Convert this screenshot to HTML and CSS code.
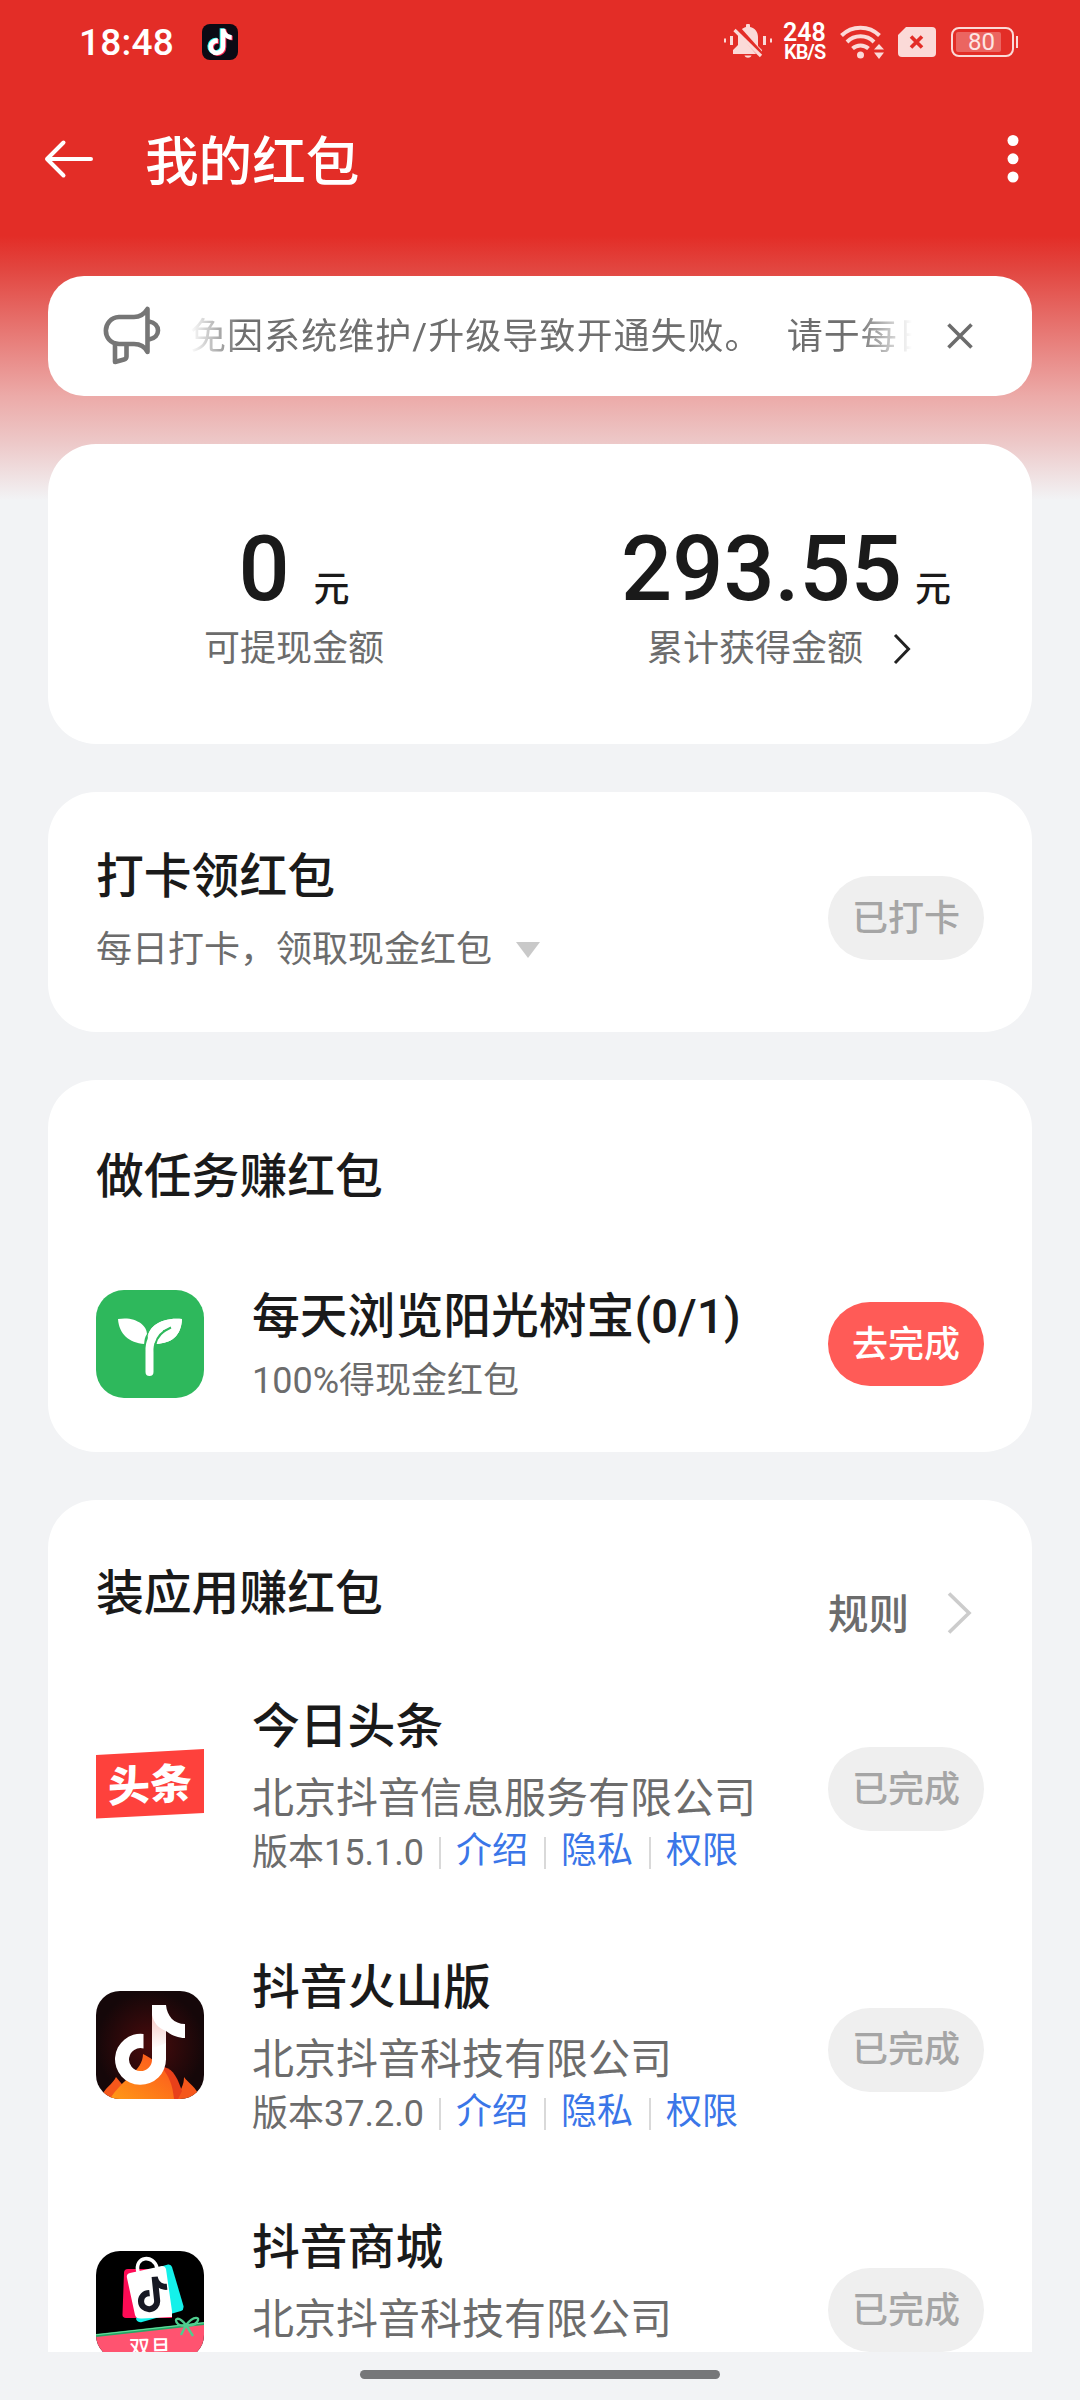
FILE: index.html
```html
<!DOCTYPE html>
<html lang="zh-CN">
<head>
<meta charset="utf-8">
<title>我的红包</title>
<link rel="stylesheet" href="styles.css">
</head>
<body>
<svg class="defs" width="0" height="0">
  <symbol id="note" viewBox="0 0 108 108"><path d="M56 14H70C71 25 78 33 89 33V47C82 47 75 44 70 40V68A25.5 25.5 0 1 1 47.5 43V57.5A11.5 11.5 0 1 0 56 68Z"/></symbol>
</svg>
<div class="screen">
  <div class="status">
    <span class="time">18:48</span>
    <svg class="app-badge" width="36" height="36" viewBox="0 0 36 36">
      <rect width="36" height="36" rx="8" fill="#0b0a14"/>
      <use href="#note" x="-1" y="-.5" width="36" height="36" fill="#25f4ee"/>
      <use href="#note" x="1" y=".7" width="36" height="36" fill="#fe2c55"/>
      <use href="#note" x="0" y="0" width="36" height="36" fill="#fff"/>
    </svg>
    <div class="indicators">
      <svg width="48" height="36" viewBox="0 0 48 36" fill="#fbdad8">
        <path d="M0 14.500h2v4H0zM6 12h3v9H6zM39 12h3v9h-3zM46 14.500h2v4h-2z"/>
        <path d="M9 30v-4l5-5v-9C15 7 18 4 22 3V1.500a2 2 0 0 1 4 0V3c5 1 8 5 8 10v9l4 4v4z"/>
        <path d="M20.500 31.500h7c-1 3-6 3-7 0z"/>
        <path d="M12.500 3.500 38 32" stroke="#e32d27" stroke-width="6"/>
        <path d="M10.500 6 37 32" stroke="#fbdad8" stroke-width="3.200"/>
      </svg>
      <div class="speed"><b>248</b><b class="unit">KB/S</b></div>
      <svg class="wifi" width="45" height="36" viewBox="0 0 45 36">
        <g fill="none" stroke="#fbdad8" stroke-width="4">
          <path d="M1.500 11.500a27 27 0 0 1 38 0"/><path d="M7 18a19 19 0 0 1 27 0"/><path d="M12.500 24.500a12 12 0 0 1 16 0"/>
        </g>
        <circle cx="20.500" cy="31" r="3.500" fill="#fbdad8"/>
        <path d="M34 25.500 39 20l5 5.500zM34 28.500h10L39 35z" fill="#fbdad8"/>
      </svg>
      <svg class="sim" width="38" height="30" viewBox="0 0 38 30">
        <path d="M8 0h26a4 4 0 0 1 4 4v22a4 4 0 0 1-4 4H4a4 4 0 0 1-4-4V8z" fill="#fbdad8"/>
        <path d="m13 9.500 11 11m0-11-11 11" stroke="#e32d27" stroke-width="3.600"/>
      </svg>
      <div class="battery"><span>80</span></div>
    </div>
  </div>

  <header class="bar">
    <svg width="50" height="40" viewBox="0 0 50 40" fill="none" stroke="#fff" stroke-width="4" stroke-linecap="round" stroke-linejoin="round"><path d="M47 20H3M19.500 3.500 3 20l16.500 16.500"/></svg>
    <h1>我的红包</h1>
    <svg class="more" width="12" height="50" viewBox="0 0 12 50" fill="#fff"><circle cx="6" cy="6.500" r="5.500"/><circle cx="6" cy="24.800" r="5.500"/><circle cx="6" cy="43" r="5.500"/></svg>
  </header>

  <main>
    <section class="notice">
      <svg width="60" height="60" viewBox="0 0 60 60" fill="none" stroke="#767676" stroke-width="4.600" stroke-linejoin="round">
        <path d="M17 11H32C38 11 43 7 45.500 3V46C43 41 38 38 32 38H17C-1 37 0 12 17 11Z"/>
        <path d="M47 15.500c12 2 12 16 0 18M13 39v17l9-2.500c2-.6 2.500-1.500 2.500-3V39"/>
      </svg>
      <div class="ticker">免因系统维护/升级导致开通失败。<span>请于每日</span></div>
      <svg width="26" height="26" viewBox="0 0 26 26" stroke="#6c6c6c" stroke-width="3.600"><path d="m1.500 1.500 23 23m0-23-23 23"/></svg>
    </section>

    <section class="card balance">
      <div class="col">
        <div class="amount"><b>0</b><span>元</span></div>
        <div class="label">可提现金额</div>
      </div>
      <div class="col total">
        <div class="amount"><b>293.55</b><span>元</span></div>
        <div class="label">累计获得金额<svg width="18" height="32" viewBox="0 0 18 32" fill="none" stroke="#222" stroke-width="3"><path d="m2 2 13.500 14L2 30"/></svg></div>
      </div>
    </section>

    <section class="card checkin">
      <div>
        <h2>打卡领红包</h2>
        <p class="sub">每日打卡，领取现金红包<svg width="26" height="18" viewBox="0 0 26 18"><path d="M1 1h24L13 17z" fill="#c9c9c9"/></svg></p>
      </div>
      <button class="pill">已打卡</button>
    </section>

    <section class="card tasks">
      <h2>做任务赚红包</h2>
      <div class="task">
        <svg class="icon" width="108" height="108" viewBox="0 0 108 108">
          <rect width="108" height="108" rx="28" fill="#2eb85c"/>
          <path d="M22 29C39 26 51 35 51 44C49 47 48 50 48.500 54C33 53 23 44 22 29Z" fill="#fff"/>
          <path d="M86 29C85 46 76 53 60 54C61 48 67 43 75 38C66 40 56 44 51 53C50 37 65 27 86 29Z" fill="#fff"/>
          <path d="M68 40.500C58 45 53 51 53.500 62V82" fill="none" stroke="#2eb85c" stroke-width="12"/>
          <path d="M64 43C56 47 53 52 53.500 62V82" fill="none" stroke="#fff" stroke-width="8" stroke-linecap="round"/>
          <path d="M86 29C85 46 76 53 60 54C61 48 67 43 74 38C66 40 57 44 52 51C50 37 65 27 86 29Z" fill="#fff"/>
          <path d="M75 37.500C67 41 61 46 59.500 54" fill="none" stroke="#2eb85c" stroke-width="2"/>
        </svg>
        <div class="info"><h3>每天浏览阳光树宝(0/1)</h3><p class="sub">100%得现金红包</p></div>
        <button class="pill go">去完成</button>
      </div>
    </section>

    <section class="card apps">
      <div class="head">
        <h2>装应用赚红包</h2>
        <a class="rules"><span>规则</span><svg width="26" height="42" viewBox="0 0 26 42" fill="none" stroke="#ccc" stroke-width="3.600"><path d="m2 1.500 20 19.500L2 40.500"/></svg></a>
      </div>

      <article class="app">
        <svg class="icon" width="108" height="108" viewBox="0 0 108 108">
          <path d="M0 25 108 19V83L0 88.500Z" fill="#fe413c"/>
          <text class="toutiao" x="12" y="70" transform="matrix(1 -.055 0 1 0 3)">头条</text>
        </svg>
        <div class="info">
          <h3>今日头条</h3>
          <p class="company">北京抖音信息服务有限公司</p>
          <p class="meta"><span>版本15.1.0</span><i></i><a>介绍</a><i></i><a>隐私</a><i></i><a>权限</a></p>
        </div>
        <button class="pill">已完成</button>
      </article>

      <article class="app">
        <svg class="icon" width="108" height="108" viewBox="0 0 108 108">
          <defs>
            <radialGradient id="ember"><stop offset="0" stop-color="#4a0b0c"/><stop offset="1" stop-color="#150709"/></radialGradient>
            <linearGradient id="flame" x1="0" y1="1" x2="1" y2="0"><stop offset="0" stop-color="#ff9a16"/><stop offset="1" stop-color="#fc4f1e"/></linearGradient>
            <linearGradient id="fold" x1="0" y1="0" x2="0" y2="1"><stop offset="0" stop-color="#f6c9c4"/><stop offset="1" stop-color="#fff"/></linearGradient>
            <clipPath id="tile"><rect width="108" height="108" rx="24"/></clipPath>
          </defs>
          <g clip-path="url(#tile)">
            <rect width="108" height="108" fill="url(#ember)"/>
            <path d="M4 108C8 97 17 93 20 86L30 98V108Z" fill="#f5571b"/>
            <path d="M80 108C85 98 88 94 88 86C92 92 101 96 104 108Z" fill="#f5571b"/>
            <path d="M68 76C78 78 82 89 86 100L82 108H60Z" fill="#e8401a"/>
            <path d="M14 108C26 88 47 80 47 63C60 70 76 80 78 108Z" fill="url(#flame)"/>
            <use href="#note" width="108" height="108" fill="#fff"/>
            <path d="M56 24C58 32 62 37 70 40V52L56 58Z" fill="url(#fold)"/>
          </g>
        </svg>
        <div class="info">
          <h3>抖音火山版</h3>
          <p class="company">北京抖音科技有限公司</p>
          <p class="meta"><span>版本37.2.0</span><i></i><a>介绍</a><i></i><a>隐私</a><i></i><a>权限</a></p>
        </div>
        <button class="pill">已完成</button>
      </article>

      <article class="app">
        <svg class="icon" width="108" height="108" viewBox="0 0 108 108">
          <g clip-path="url(#tile)">
            <rect width="108" height="108" fill="#000"/>
            <path d="M32 18H72Q75 18 75 22L76 67H30Q26 67 26.500 63L28 22Q28 18 32 18Z" fill="#fe0b55"/>
            <path d="M60 17 72 13.500Q75 13 76 16L87.500 55Q88 59 85 60L46 71Q42 72 40 68Z" fill="#14f1ea"/>
            <path d="M34 22 66 15Q69 15 70 18L76 60V66L46 67.500Q40 68 39 64L31 27Q30 23 34 22Z" fill="#fff"/>
            <path d="M42 21C38 5 58 3 61 17" fill="none" stroke="#fff" stroke-width="3.600"/>
            <use href="#note" x="33" y="20" width="47" height="47" fill="#161823" transform="rotate(-6 56 43)"/>
            <path d="M0 85 108 73V108H0Z" fill="#ff5370"/>
            <path d="M0 84.500 108 72.500" stroke="#24a866" stroke-width="3"/>
            <path d="M0 83.800 108 71.800" stroke="#69dea0" stroke-width="1"/>
            <path d="M90 74C82 64 77 68 82 73C84 75 88 75 90 74C98 64 105 66 101 71C99 74 94 75 90 74L85 84M90 74 97 85" fill="none" stroke="#4fcd8e" stroke-width="2.400"/>
            <text class="ribbon" x="33" y="104" transform="rotate(-1 54 96)">双旦</text>
          </g>
        </svg>
        <div class="info">
          <h3>抖音商城</h3>
          <p class="company">北京抖音科技有限公司</p>
        </div>
        <button class="pill">已完成</button>
      </article>
    </section>
  </main>
  <div class="nav"><span></span></div>
</div>
</body>
</html>
```
FILE: styles.css
```css
* { box-sizing: border-box; margin: 0; padding: 0; }

body {
  background: #f2f3f5;
  font-family: Roboto, "Noto Sans CJK SC", sans-serif;
  color: #1a1a1a;
}

svg { display: block; flex: none; }
.defs { position: absolute; }

.screen {
  width: 1080px;
  height: 2400px;
  overflow: hidden;
  display: flex;
  flex-direction: column;
  background: linear-gradient(#e32d27 236px, #e2453f 268px, #ecaaa8 396px, #edc9c9 444px, #f2f3f5 500px);
}

.status {
  height: 84px;
  display: flex;
  align-items: center;
  padding: 0 62px 0 79px;
  color: #fff;
}
.time { font-size: 37px; line-height: 48px; font-weight: 500; width: 123px; padding-top: 2px; letter-spacing: .2px; }
.indicators { margin-left: auto; display: flex; align-items: center; }
.speed { width: 44px; margin-left: 11px; display: flex; flex-direction: column; font-weight: 600; }
.speed b { font-size: 25px; line-height: 20px; font-weight: 600; }
.speed .unit { font-size: 20px; line-height: 17px; letter-spacing: -1px; padding-left: 1px; margin-top: 1px; }
.wifi { margin-left: 13px; }
.sim { margin-left: 13px; }
.battery {
  width: 63px;
  height: 30px;
  margin: 0 4px 0 15px;
  padding: 3px 11px 3px 3px;
  border: 2px solid #fbdad8;
  border-radius: 8px;
  position: relative;
}
.battery::after {
  content: "";
  position: absolute;
  right: -6px;
  top: 7px;
  width: 2px;
  height: 12px;
  background: #fbdad8;
}
.battery span {
  display: block;
  height: 20px;
  padding-left: 12px;
  border-radius: 2px;
  background: #eb6561;
  color: #fde6e4;
  font-size: 24px;
  line-height: 21px;
}

.bar {
  height: 150px;
  display: flex;
  align-items: center;
  padding: 0 61px 0 44px;
  color: #fff;
}
.bar h1 { margin-left: 51px; height: 72px; font-size: 53.600px; line-height: 80px; font-weight: 500; }
.more { margin-left: auto; }

main {
  height: 2118px;
  overflow: hidden;
  padding: 42px 48px 0;
  display: flex;
  flex-direction: column;
  gap: 48px;
}
main > * { flex: none; }

.notice {
  height: 120px;
  display: flex;
  align-items: center;
  padding: 0 59px 0 54px;
  border-radius: 36px;
  background: #fff;
}
.ticker {
  width: 724px;
  height: 52px;
  margin: 0 35px 0 28px;
  overflow: hidden;
  white-space: nowrap;
  color: #6f6f6f;
  font-size: 36px;
  line-height: 54px;
  letter-spacing: 1.050px;
  -webkit-mask-image: linear-gradient(90deg, transparent, #000 50px, #000 666px, transparent);
  mask-image: linear-gradient(90deg, transparent, #000 50px, #000 666px, transparent);
}
.ticker span { margin-left: 25px; }

.card { border-radius: 48px; background: #fff; }

h2, h3 { height: 64px; font-size: 47.800px; line-height: 73px; font-weight: 500; white-space: nowrap; }
.sub {
  height: 48px;
  display: flex;
  align-items: flex-start;
  color: #6c6c6c;
  font-size: 36px;
  line-height: 54px;
  white-space: nowrap;
}

.balance { height: 300px; display: grid; grid-template-columns: 1fr 1fr; padding-top: 77px; }
.amount { height: 96px; display: flex; justify-content: center; align-items: baseline; }
.amount b { font-size: 90px; line-height: 97px; font-weight: 500; }
.amount span { margin-left: 24px; font-size: 36px; line-height: 36px; font-weight: 500; position: relative; top: 2px; }
.total .amount span { margin-left: 13px; }
.label {
  height: 48px;
  margin-top: 5px;
  display: flex;
  justify-content: center;
  align-items: flex-start;
  color: #6c6c6c;
  font-size: 36px;
  line-height: 54px;
}
.label svg { margin: 11px 14px 0 30px; }

.checkin { height: 240px; display: flex; justify-content: space-between; padding: 49px 48px 0; }
.checkin .sub { margin-top: 18px; }
.checkin .sub svg { margin: 18px 0 0 23px; }
.checkin .pill { margin-top: 35px; }

.pill {
  width: 156px;
  height: 84px;
  flex: none;
  padding-top: 1px;
  border: 0;
  border-radius: 42px;
  background: #efefef;
  color: #a5a5a5;
  font: 500 36px/48px Roboto, "Noto Sans CJK SC", sans-serif;
}
.pill.go { background: #ff5b57; color: #fff; }

.tasks { height: 372px; padding: 61px 48px 0; }
.task { height: 126px; margin-top: 76px; display: flex; align-items: center; }
.info { flex: 1; align-self: flex-start; margin-left: 48px; }
.task .sub { margin-top: 9px; }

.apps { padding: 58px 48px 0; }
.head { height: 133px; display: flex; justify-content: space-between; }
.rules {
  height: 64px;
  margin-top: 23px;
  padding-right: 11px;
  display: flex;
  align-items: center;
  gap: 38px;
  color: #6c6c6c;
  font-size: 40.500px;
  font-weight: 500;
}
.rules span { height: 64px; line-height: 69px; }
.app { height: 260.5px; display: flex; }
.app .icon { margin-top: 39px; }
.app .pill { margin-top: 56px; }
.company { height: 52px; margin-top: 14px; font-size: 42px; line-height: 59px; color: #6c6c6c; white-space: nowrap; }
.meta {
  height: 50px;
  margin-top: 5px;
  display: flex;
  font-size: 36px;
  line-height: 54px;
  color: #6c6c6c;
  white-space: nowrap;
}
.meta span { width: 171px; height: 48px; }
.meta i { width: 2px; height: 32px; margin: 11px 15.500px 0; background: #d9d9d9; }
.meta a { height: 48px; line-height: 50px; color: #3a76e8; }

.toutiao { font: 900 42px "Noto Sans CJK SC", sans-serif; fill: #fff; }
.ribbon { font: 500 21px "Noto Sans CJK SC", sans-serif; fill: #fff; }

.nav { height: 48px; display: flex; justify-content: center; padding-top: 18px; background: #f2f3f5; }
.nav span { width: 360px; height: 9px; border-radius: 5px; background: #767779; }
```
